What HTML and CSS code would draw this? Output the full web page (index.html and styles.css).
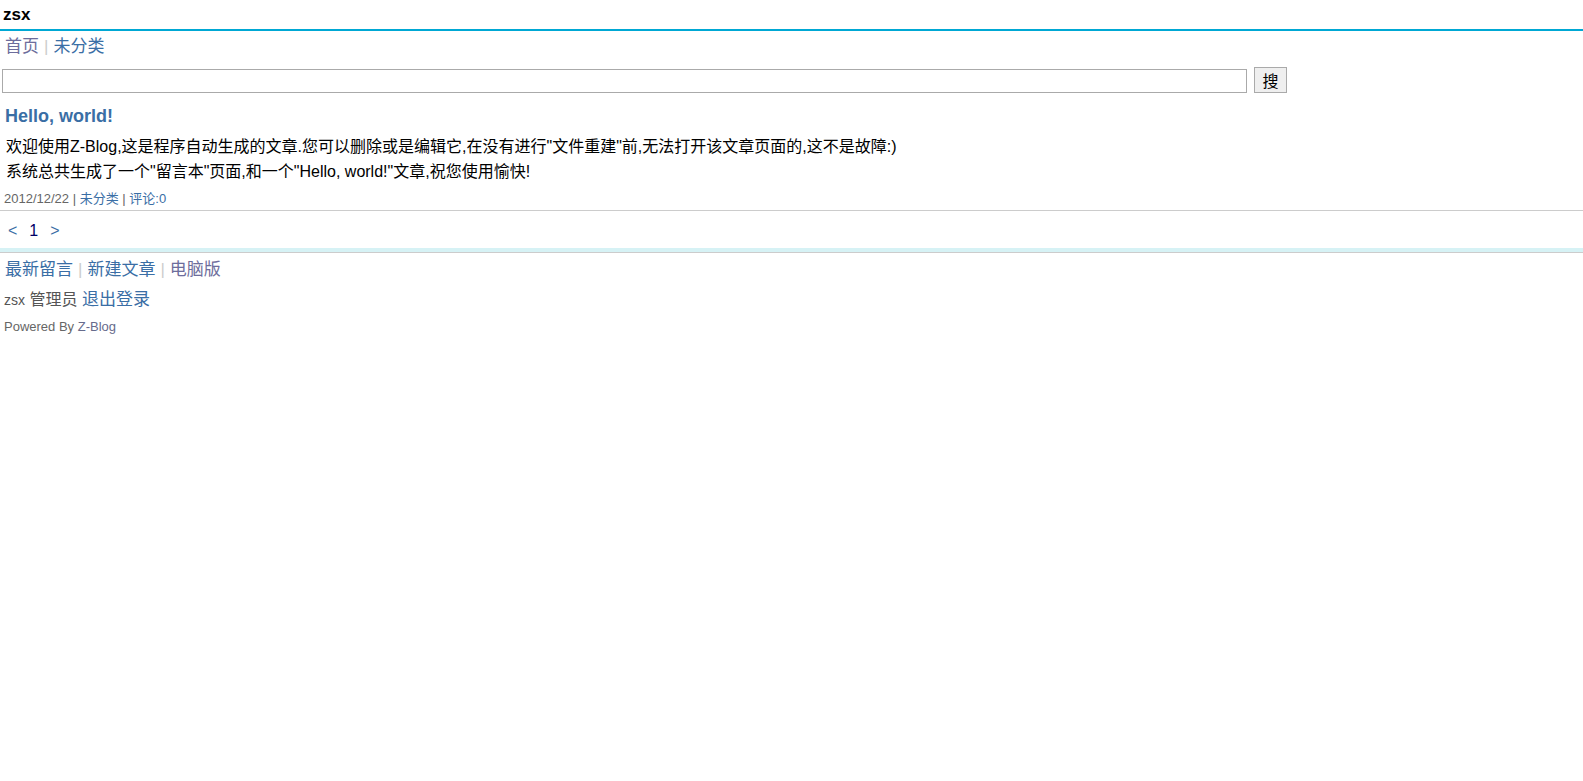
FILE: index.html
```html
<!DOCTYPE html>
<html lang="zh-CN">
<head>
    <meta charset="UTF-8">
    <title>zsx</title>
    <link rel="stylesheet" href="styles.css">
</head>
<body>
    <!-- Header -->
    <div class="header">
        <h1 class="site-name">zsx</h1>
    </div>

    <!-- Navbar -->
    <div class="nav">
        <a href="#" class="visited">首页</a><span class="sep">|</span><a href="#">未分类</a>
    </div>

    <!-- Search -->
    <form class="search">
        <input type="text" class="search-input">
        <button type="submit" class="search-btn">搜</button>
    </form>

    <!-- Post -->
    <div class="post">
        <h2 class="post-title"><a href="#">Hello, world!</a></h2>
        <div class="post-body">
            <p>欢迎使用Z-Blog,这是程序自动生成的文章.您可以删除或是编辑它,在没有进行"文件重建"前,无法打开该文章页面的,这不是故障:)</p>
            <p>系统总共生成了一个"留言本"页面,和一个"Hello, world!"文章,祝您使用愉快!</p>
        </div>
        <div class="post-meta">2012/12/22 | <a href="#">未分类</a> | <a href="#">评论:0</a></div>
    </div>

    <!-- Pagination -->
    <div class="pager">
        <a href="#">&lt;</a><span class="current">1</span><a href="#">&gt;</a>
    </div>

    <!-- Footer -->
    <div class="footer">
        <div class="footer-links">
            <a href="#">最新留言</a><span class="sep">|</span><a href="#">新建文章</a><span class="sep">|</span><a href="#" class="visited">电脑版</a>
        </div>
        <div class="user">
            <span class="user-name">zsx</span> 管理员 <a href="#">退出登录</a>
        </div>
        <div class="powered">Powered By <a href="#">Z-Blog</a></div>
    </div>
</body>
</html>
```

FILE: styles.css
```css
/* Global Styles */
body {
    margin: 0;
    padding: 0;
    font-family: "Liberation Sans", Arial, "Noto Sans CJK SC", sans-serif;
    font-size: 14px;
    color: #000;
    background-color: #fff;
}

a {
    color: #3a6ea5;
    text-decoration: none;
}

a.visited {
    color: #6d6d9c;
}

.sep {
    color: #ccc;
    margin: 0 5px;
}

/* Header */
.header {
    height: 29px;
    border-bottom: 2px solid #00a8d4;
    padding: 0 3px;
}

.site-name {
    margin: 0;
    font-size: 17px;
    line-height: 30px;
    font-weight: bold;
}

/* Navbar */
.nav {
    padding: 5px 5px 0;
    font-size: 17px;
    line-height: 22px;
    height: 29px;
}

/* Search */
.search {
    display: flex;
    align-items: flex-end;
    margin: 0;
    padding: 2px 2px 0;
    gap: 7px;
}

.search-input {
    width: 1239px;
    height: 20px;
    margin: 0;
    padding: 1px 2px;
    border: 1px solid #aaa;
    box-sizing: content-box;
}

.search-btn {
    height: 26px;
    width: 33px;
    margin: 0;
    padding: 0;
    font-size: 16px;
    font-family: "Noto Sans CJK SC", sans-serif;
    background-color: #efefef;
    border: 1px solid #aaa;
    border-radius: 0;
}

/* Post */
.post {
    padding: 11px 5px 2px 4px;
    border-bottom: 1px solid #ccc;
}

.post-title {
    margin: 0 0 6px 1px;
    font-size: 18px;
    line-height: 24px;
    font-weight: bold;
}

.post-body p {
    margin: 0 0 0 2px;
    font-size: 16px;
    line-height: 25px;
}

.post-meta {
    margin-top: 6px;
    font-size: 13px;
    line-height: 18px;
    color: #666;
}

/* Pagination */
.pager {
    padding: 10px 8px 6px;
    font-size: 16px;
    line-height: 20px;
    height: 21px;
    border-bottom: 4px solid #d6f2f5;
}

.pager a,
.pager .current {
    margin-right: 12px;
}

.pager .current {
    color: #000066;
}

/* Footer */
.footer {
    border-top: 1px solid #ccc;
    padding: 6px 4px;
}

.footer-links {
    font-size: 17px;
    line-height: 22px;
    padding-left: 1px;
}

.user {
    margin-top: 8px;
    font-size: 16px;
    line-height: 22px;
    color: #555;
}

.user a {
    font-size: 17px;
}

.user-name {
    font-size: 14px;
}

.powered {
    margin-top: 8px;
    font-size: 13px;
    line-height: 16px;
    color: #666;
}

.powered a {
    color: #666b8c;
}
```
